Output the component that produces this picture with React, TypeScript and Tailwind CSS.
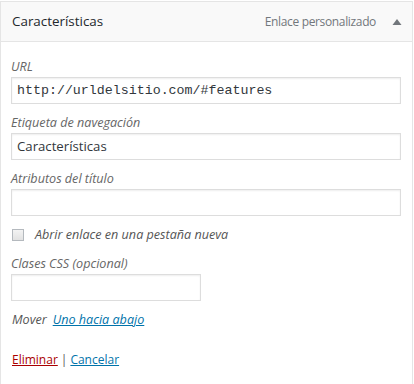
import React from "react";

const font = { fontFamily: '"Open Sans", "Noto Sans", sans-serif' };

function Field({ label, value, mono, narrow }: { label: string; value?: string; mono?: boolean; narrow?: boolean }) {
  return (
    <div className="flex flex-col">
      <div className="h-[19px] leading-[19px] text-[12.6px] italic text-[#666]">{label}</div>
      <div
        className={`mt-px h-[27px] border border-[#ddd] bg-white shadow-[inset_0_1px_2px_rgba(0,0,0,0.07)] flex items-center px-[5px] text-[#32373c] ${
          narrow ? "w-[190px]" : "w-[390px]"
        }`}
      >
        {value && (
          <span
            className={mono ? "text-[13.3px] leading-none" : "text-[13.2px] leading-none"}
            style={mono ? { fontFamily: '"Liberation Mono", "DejaVu Sans Mono", monospace' } : undefined}
          >
            {value}
          </span>
        )}
      </div>
    </div>
  );
}

export default function App() {
  return (
    <div className="w-[414px] h-[384px] bg-white pt-px" style={font}>
      <div className="w-[413px] border border-[#e5e5e5] bg-white">
        <div className="h-[40px] bg-[#f9f9f9] border-b border-[#e5e5e5] flex items-center pl-[11px] pr-[10px]">
          <div className="text-[13.4px] text-[#23282d] flex-1">Características</div>
          <div className="text-[12px] tracking-[-0.35px] text-[#72777c]">Enlace personalizado</div>
          <svg width="10" height="8" viewBox="0 0 10 8" className="ml-[16px]">
            <polygon points="5,1 9.5,7 0.5,7" fill="#72777c" />
          </svg>
        </div>
        <div className="pl-[10px] pt-[15px] pb-[15px]">
          <Field label="URL" value="http://urldelsitio.com/#features" mono />
          <div className="mt-[9px]">
            <Field label="Etiqueta de navegación" value="Características" />
          </div>
          <div className="mt-[9px]">
            <Field label="Atributos del título" />
          </div>
          <label className="mt-[9px] h-[20px] flex items-center">
            <span className="ml-px w-[12px] h-[12px] border border-[#b4b9be] bg-gradient-to-b from-[#f3f3f3] to-[#e2e2e2] inline-block" />
            <span className="ml-[11px] text-[12.6px] italic text-[#555]">Abrir enlace en una pestaña nueva</span>
          </label>
          <div className="mt-[9px]">
            <Field label="Clases CSS (opcional)" narrow />
          </div>
          <div className="mt-[9px] h-[19px] leading-[19px] text-[12.6px] italic text-[#555] flex">
            <span className="ml-px">Mover</span>
            <a className="ml-[6px] text-[#0073aa] underline">Uno hacia abajo</a>
          </div>
          <div className="mt-[21px] h-[19px] leading-[19px] text-[12px] text-[#555] flex">
            <a className="ml-px text-[#a00] underline">Eliminar</a>
            <span className="mx-[3px]">|</span>
            <a className="text-[#0073aa] underline">Cancelar</a>
          </div>
        </div>
      </div>
    </div>
  );
}
